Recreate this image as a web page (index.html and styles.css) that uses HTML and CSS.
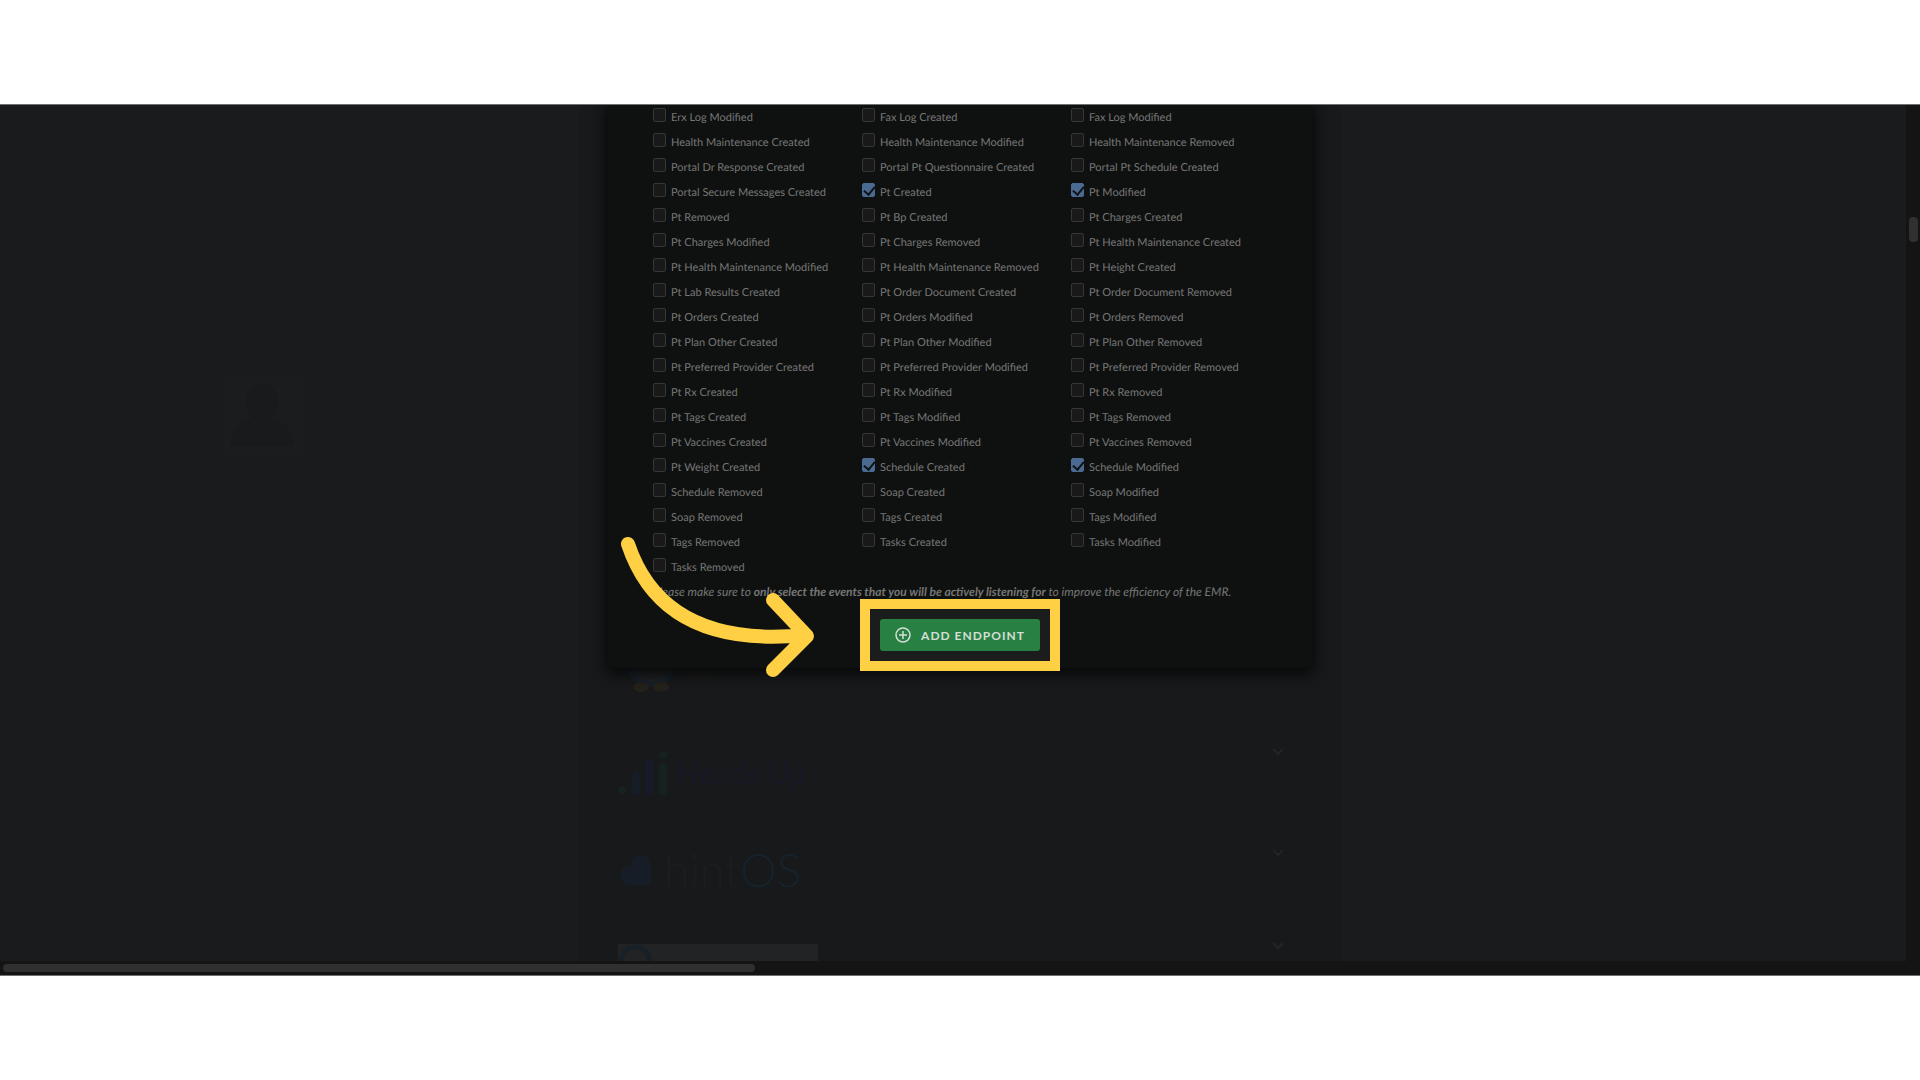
FILE: index.html
```html
<!DOCTYPE html>
<html lang="en">
<head>
  <meta charset="UTF-8">
  <title>Add Endpoint</title>
  <link rel="stylesheet" href="styles.css">
</head>
<body>
  <div class="frame">
    <div class="page">
      <aside class="sidebar">
        <svg class="avatar" viewBox="0 0 80 80"><ellipse cx="40" cy="28" rx="16" ry="19"/><path d="M8 71c4-20 12-28 32-28s28 8 32 28z"/></svg>
      </aside>
      <main class="integrations">
        <section class="card">
          <svg class="logo" width="60" height="60" viewBox="0 0 60 60">
            <ellipse cx="33" cy="21" rx="25" ry="24" fill="#172029"/>
            <ellipse cx="33" cy="19" rx="19" ry="21" fill="#202123"/>
            <ellipse cx="23" cy="45" rx="8" ry="5" fill="#24201a"/>
            <ellipse cx="43" cy="45" rx="8" ry="5" fill="#24201a"/>
          </svg>
          <span class="logo-fx">FX</span>
        </section>
        <section class="card">
          <svg class="logo" width="50" height="44" viewBox="0 0 50 44">
            <g fill="#162222"><circle cx="4" cy="39" r="4"/><circle cx="45" cy="4" r="4"/><rect x="41" y="12" width="8" height="32" rx="4"/></g>
            <rect x="14" y="21" width="8" height="23" rx="4" fill="#161d27"/>
            <rect x="27" y="9" width="9" height="35" rx="4" fill="#171b29"/>
          </svg>
          <span class="logo-heads">Heads Up</span>
          <svg class="chevron" viewBox="0 0 12 8"><path d="M1 1l5 5 5-5"/></svg>
        </section>
        <section class="card card-short">
          <svg class="logo" width="34" height="32" viewBox="0 0 34 32">
            <path d="M12 31C5 31 2 26 2 21c0-6 5-10 11-9C13 5 17 1 23 1c7 0 10 5 10 11v19z" fill="#161d27"/>
          </svg>
          <span class="logo-hint">hint<b>OS</b></span>
          <svg class="chevron" viewBox="0 0 12 8"><path d="M1 1l5 5 5-5"/></svg>
        </section>
        <section class="card">
          <svg class="banner" width="200" height="46" viewBox="0 0 200 46">
            <rect width="200" height="46" fill="#212324"/>
            <circle cx="17" cy="17" r="14" fill="none" stroke="#172027" stroke-width="5"/>
          </svg>
          <svg class="chevron" viewBox="0 0 12 8"><path d="M1 1l5 5 5-5"/></svg>
        </section>
      </main>
    </div>

    <div class="overlay">
      <form class="modal">
        <div class="events">
          <label><input type="checkbox">Erx Log Modified</label>
          <label><input type="checkbox">Fax Log Created</label>
          <label><input type="checkbox">Fax Log Modified</label>
          <label><input type="checkbox">Health Maintenance Created</label>
          <label><input type="checkbox">Health Maintenance Modified</label>
          <label><input type="checkbox">Health Maintenance Removed</label>
          <label><input type="checkbox">Portal Dr Response Created</label>
          <label><input type="checkbox">Portal Pt Questionnaire Created</label>
          <label><input type="checkbox">Portal Pt Schedule Created</label>
          <label><input type="checkbox">Portal Secure Messages Created</label>
          <label><input type="checkbox" checked>Pt Created</label>
          <label><input type="checkbox" checked>Pt Modified</label>
          <label><input type="checkbox">Pt Removed</label>
          <label><input type="checkbox">Pt Bp Created</label>
          <label><input type="checkbox">Pt Charges Created</label>
          <label><input type="checkbox">Pt Charges Modified</label>
          <label><input type="checkbox">Pt Charges Removed</label>
          <label><input type="checkbox">Pt Health Maintenance Created</label>
          <label><input type="checkbox">Pt Health Maintenance Modified</label>
          <label><input type="checkbox">Pt Health Maintenance Removed</label>
          <label><input type="checkbox">Pt Height Created</label>
          <label><input type="checkbox">Pt Lab Results Created</label>
          <label><input type="checkbox">Pt Order Document Created</label>
          <label><input type="checkbox">Pt Order Document Removed</label>
          <label><input type="checkbox">Pt Orders Created</label>
          <label><input type="checkbox">Pt Orders Modified</label>
          <label><input type="checkbox">Pt Orders Removed</label>
          <label><input type="checkbox">Pt Plan Other Created</label>
          <label><input type="checkbox">Pt Plan Other Modified</label>
          <label><input type="checkbox">Pt Plan Other Removed</label>
          <label><input type="checkbox">Pt Preferred Provider Created</label>
          <label><input type="checkbox">Pt Preferred Provider Modified</label>
          <label><input type="checkbox">Pt Preferred Provider Removed</label>
          <label><input type="checkbox">Pt Rx Created</label>
          <label><input type="checkbox">Pt Rx Modified</label>
          <label><input type="checkbox">Pt Rx Removed</label>
          <label><input type="checkbox">Pt Tags Created</label>
          <label><input type="checkbox">Pt Tags Modified</label>
          <label><input type="checkbox">Pt Tags Removed</label>
          <label><input type="checkbox">Pt Vaccines Created</label>
          <label><input type="checkbox">Pt Vaccines Modified</label>
          <label><input type="checkbox">Pt Vaccines Removed</label>
          <label><input type="checkbox">Pt Weight Created</label>
          <label><input type="checkbox" checked>Schedule Created</label>
          <label><input type="checkbox" checked>Schedule Modified</label>
          <label><input type="checkbox">Schedule Removed</label>
          <label><input type="checkbox">Soap Created</label>
          <label><input type="checkbox">Soap Modified</label>
          <label><input type="checkbox">Soap Removed</label>
          <label><input type="checkbox">Tags Created</label>
          <label><input type="checkbox">Tags Modified</label>
          <label><input type="checkbox">Tags Removed</label>
          <label><input type="checkbox">Tasks Created</label>
          <label><input type="checkbox">Tasks Modified</label>
          <label><input type="checkbox">Tasks Removed</label>
        </div>
        <p class="note">Please make sure to <b>only select the events that you will be actively listening for</b> to improve the efficiency of the EMR.</p>
        <div class="actions">
          <div class="highlight">
            <button class="button" type="button">
              <svg width="16" height="16" viewBox="0 0 16 16"><circle cx="8" cy="8" r="7"/><path d="M8 4v8M4 8h8"/></svg>
              ADD ENDPOINT
            </button>
          </div>
        </div>
        <svg class="arrow" width="200" height="150" viewBox="0 0 200 150">
          <path d="M13 14C35 80 90 115 190 105M158 70L192 106L158 140"/>
        </svg>
      </form>
    </div>

    <div class="scroll-y"><div class="thumb-y"></div></div>
    <div class="scroll-x"><div class="thumb-x"></div></div>
  </div>
</body>
</html>
```
FILE: styles.css
```css
* { box-sizing: border-box; }
body {
  margin: 0;
  height: 100vh;
  padding: 104px 0;
  background: #fff;
  font-family: Lato, "Liberation Sans", sans-serif;
  font-size: 12px;
  text-rendering: geometricPrecision;
}

/* everything is stacked in one grid, scrollbars on the edges */
.frame {
  display: grid;
  grid-template-columns: minmax(0, 1fr) 14px;
  grid-template-rows: minmax(0, 1fr) 14px;
  height: 100%;
  overflow: hidden;
  background: #191b1c;
  border-top: 1px solid #6f7170;
  border-bottom: 1px solid #6f7170;
}
.page, .overlay { grid-area: 1 / 1 / 3 / 3; min-height: 0; }

.page {
  display: grid;
  grid-template-columns: 1fr 762px 1fr;
  overflow: hidden;
}
.sidebar { padding: 270px 0 0 222px; }
.avatar { width: 80px; height: 80px; background: #1a1c1d; fill: #191a1b; }
.integrations {
  display: flex;
  flex-direction: column;
  gap: 21px;
  padding: 527px 26px 0;
  background: #17191a;
}
.card {
  display: flex;
  flex-shrink: 0;
  align-items: center;
  gap: 8px;
  height: 80px;
  padding: 0 12px;
  border: 1px solid #191b1c;
  border-radius: 8px;
}
.card-short { height: 72px; }
.logo-fx { font-size: 20px; color: #21191b; }
.logo-heads { font-size: 30px; font-weight: 700; color: #171823; }
.logo-hint { margin-left: 4px; font-size: 46px; line-height: 40px; font-weight: 300; color: #191e22; }
.logo-hint b { font-weight: 300; color: #16222c; }
.chevron {
  align-self: flex-start;
  width: 12px;
  height: 8px;
  margin: 14px 18px 0 auto;
  fill: none;
  stroke: #232526;
  stroke-width: 2;
}

.overlay { padding: 0 24px; }
.modal {
  position: relative;
  max-width: 704px;
  margin: 0 auto;
  padding: 0 32px 17px 45px;
  background: #0f1110;
  border-radius: 0 0 6px 6px;
  box-shadow: 0 4px 14px 2px #070808;
  color: #767676;
}
.events { display: grid; grid-template-columns: repeat(3, 1fr); font-size: 11px; }
.events label {
  display: flex;
  align-items: center;
  gap: 5px;
  height: 25px;
  white-space: nowrap;
}
.events input {
  appearance: none;
  width: 13px;
  height: 14px;
  margin: 0 0 5px;
  background: #191919;
  border: 1px solid #363636;
  border-radius: 2px;
}
.events input:checked {
  background: #4b6a92;
  border-color: #4b6a92;
}
.events input:checked::before {
  content: "";
  display: block;
  width: 5px;
  height: 9px;
  margin: 0 0 0 3px;
  border: solid #101214;
  border-width: 0 2px 2px 0;
  transform: rotate(40deg);
}
.note { margin: 0; line-height: 23px; font-style: italic; }
.actions { display: flex; justify-content: center; padding: 16px 13px 0 0; }
.highlight { position: relative; }
.highlight::before {
  content: "";
  position: absolute;
  inset: -20px;
  background: #1b1d1d;
  border: 10px solid #ffd043;
}
.button {
  position: relative;
  display: flex;
  align-items: center;
  gap: 10px;
  height: 32px;
  padding: 0 15px;
  background: #298043;
  border: 0;
  border-radius: 3px;
  color: #d3dfd5;
  font: 700 12px Lato, sans-serif;
  letter-spacing: 1px;
}
.button svg { fill: none; stroke: currentColor; stroke-width: 1.5; }
.arrow {
  position: absolute;
  left: 7px;
  bottom: -12px;
  fill: none;
  stroke: #ffd043;
  stroke-width: 14;
  stroke-linecap: round;
  stroke-linejoin: round;
}

.scroll-y { grid-area: 1 / 2; padding: 112px 2px 0 3px; background: #141414; }
.thumb-y { height: 25px; border-radius: 4px; background: #303030; }
.scroll-x { grid-area: 2 / 1 / 3 / 3; padding: 3px 3px 0; background: #141414; }
.thumb-x { width: 39.3%; height: 8px; border-radius: 4px; background: #303030; }
```
